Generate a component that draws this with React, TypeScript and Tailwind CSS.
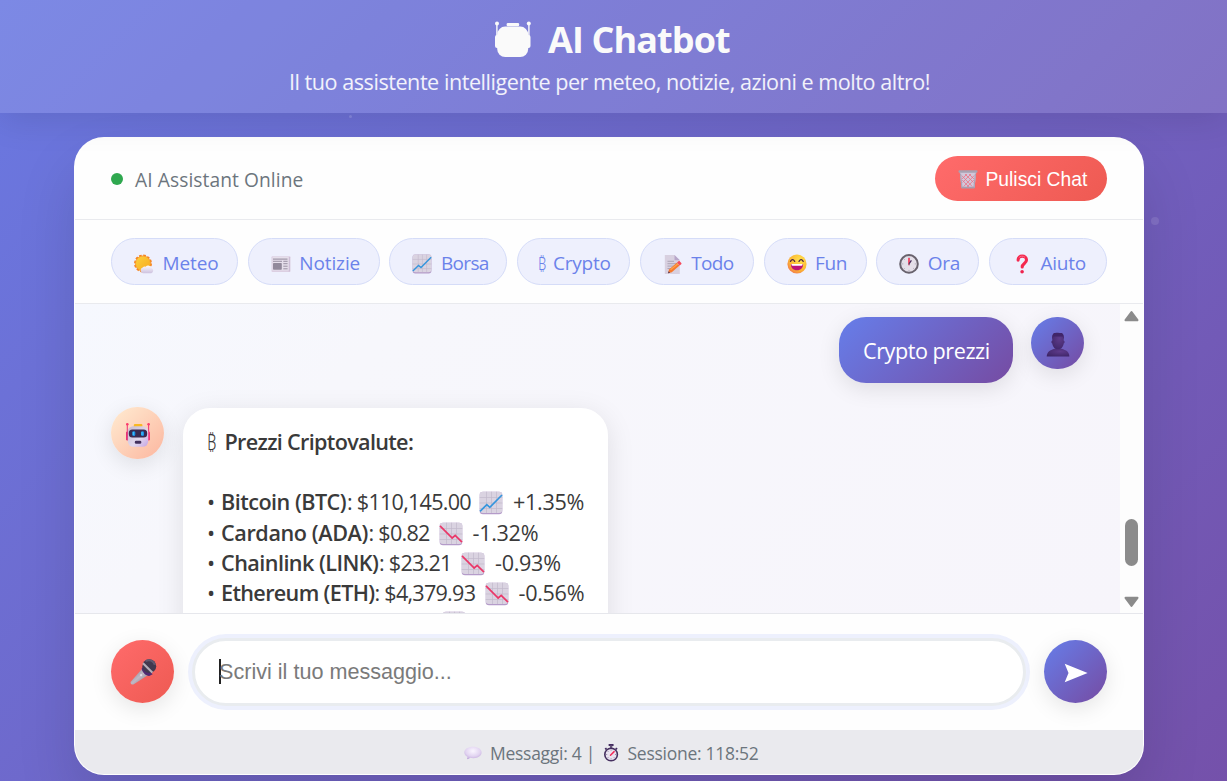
import React from "react";

type IconProps = { className?: string };

function RobotSilhouette({ className }: IconProps) {
  return (
    <svg viewBox="0 0 38 38" className={className} fill="#fafafa">
      <circle cx="3" cy="3.6" r="2" />
      <circle cx="34.8" cy="3.6" r="2" />
      <rect x="2.2" y="4" width="1.4" height="14" />
      <rect x="34.2" y="4" width="1.4" height="14" />
      <rect x="1" y="15" width="5" height="13" rx="2" />
      <rect x="31.5" y="15" width="5" height="13" rx="2" />
      <rect x="12.6" y="2.9" width="12.6" height="3.4" rx="1.4" />
      <rect x="3.2" y="6.6" width="31" height="30.4" rx="8" />
    </svg>
  );
}

function RobotIcon({ className }: IconProps) {
  return (
    <svg viewBox="0 0 26 26" className={className}>
      <defs>
        <linearGradient id="rb-head" x1="0" y1="0" x2="1" y2="1">
          <stop offset="0" stopColor="#c5bbcf" />
          <stop offset=".6" stopColor="#e2d8ee" />
          <stop offset="1" stopColor="#c4a3e4" />
        </linearGradient>
      </defs>
      <path d="M2.3 2.5v12M23.6 2.5v12" stroke="#ef3d78" strokeWidth="1.1" />
      <circle cx="2.3" cy="2.2" r="1.3" fill="#fb3c6c" />
      <circle cx="23.6" cy="2.2" r="1.3" fill="#fb3c6c" />
      <rect x="1.1" y="9.5" width="3" height="9" rx="1.3" fill="#e5246f" />
      <rect x="22" y="9.5" width="3" height="9" rx="1.3" fill="#f73b79" />
      <rect x="8.8" y="1.9" width="8.6" height="4" rx="1.2" fill="#f9b822" />
      <rect x="2.8" y="4.2" width="20.4" height="20.6" rx="5.5" fill="url(#rb-head)" />
      <rect x="3.8" y="7.6" width="18.4" height="8" rx="3.6" fill="#3a2b51" />
      <rect x="7.3" y="9.2" width="3" height="4.9" rx="1.4" fill="#1d8fe8" />
      <rect x="16" y="9.2" width="3" height="4.9" rx="1.4" fill="#1d8fe8" />
      <path d="M8.3 10v3M17 10v3" stroke="#43cdfc" strokeWidth="1" />
      <rect x="9.8" y="18.8" width="6.5" height="2.9" rx="1.3" fill="#43305c" />
    </svg>
  );
}

function UserIcon({ className }: IconProps) {
  return (
    <svg viewBox="0 0 24 25" className={className}>
      <defs>
        <radialGradient id="us" cx=".6" cy=".35" r=".8">
          <stop offset="0" stopColor="#5e3b8b" />
          <stop offset="1" stopColor="#3c2465" />
        </radialGradient>
      </defs>
      <path d="M.7 24.4C1 19.8 4 18.2 8.6 16.8h7c4.6 1.4 7.5 3 7.8 7.6z" fill="url(#us)" />
      <path d="M6.3 4.500C6.300 2 8.200.9 12 .9s5.700 1.200 5.700 3.600v3.900c1.200 0 1.200 2.800 0 3-.4 3.200-2.600 5.900-5.700 5.900s-5.300-2.700-5.700-5.900c-1.200-.2-1.200-3 0-3z" fill="url(#us)" />
      <path d="M6.500 7.600C6 3.500 7 .8 9 1.100c1.700-.7 4.800-.5 6.200 0 2 0 2.900 2.700 2.400 6.500l-.9-3.100H7.400z" fill="#402569" />
    </svg>
  );
}

function ChartIcon({ className, down }: IconProps & { down?: boolean }) {
  return (
    <svg viewBox="0 0 24 24" className={className}>
      <rect x=".7" y=".7" width="22.600" height="22.600" rx="3.300" fill="#b49bc9" />
      <rect x=".7" y=".7" width="22.600" height="21.300" rx="3.300" fill="#dad3e1" />
      <path d="M7.500.7V22M12.500.7V22M17.500.7V22M.7 6.500h22.600M.7 12h22.600M.7 17.500h22.600" stroke="#c2b9cb" strokeWidth=".7" />
      {down ? (
        <path d="M1 3.800L13.200 16l3-2.600L23 20.200" fill="none" stroke="#ea3768" strokeWidth="1.700" />
      ) : (
        <path d="M1 20.400l6.800-6.700 3 2.600L23 4" fill="none" stroke="#3595dd" strokeWidth="1.700" />
      )}
    </svg>
  );
}

function SunCloudIcon({ className }: IconProps) {
  return (
    <svg viewBox="0 0 20 20" className={className}>
      <defs>
        <linearGradient id="sc-c" x1="0" y1="0" x2="0" y2="1">
          <stop offset="0" stopColor="#fbf9fd" />
          <stop offset="1" stopColor="#cdc1df" />
        </linearGradient>
        <linearGradient id="sc-s" x1="0" y1="0" x2="1" y2="1">
          <stop offset="0" stopColor="#fcd23c" />
          <stop offset="1" stopColor="#f7a91f" />
        </linearGradient>
      </defs>
      <circle cx="9" cy="9.500" r="8" fill="none" stroke="#f5811f" strokeWidth="1.900" strokeDasharray="2.600 1.590" />
      <circle cx="9" cy="9.500" r="7.600" fill="url(#sc-s)" stroke="#f79024" strokeWidth=".8" />
      <path d="M9 19.200a2.900 2.900 0 0 1-.3-5.600 2.700 2.700 0 0 1 2.900-.9 3.800 3.800 0 0 1 6.200 1.400 2.800 2.800 0 0 1-.5 5.100z" fill="url(#sc-c)" />
    </svg>
  );
}

function NewsIcon({ className }: IconProps) {
  return (
    <svg viewBox="0 0 20 20" className={className}>
      <rect x=".5" y="2.300" width="19" height="15.700" rx="1" fill="#dccfe2" />
      <rect x="1.500" y="2.800" width="16.500" height="13.700" fill="#e6dfeb" />
      <path d="M2 5.100h14.500" stroke="#91889a" strokeWidth="1" />
      <rect x="2" y="9" width="8.800" height="6.700" rx=".8" fill="#92899b" />
      <path d="M2 7.300h9M12.300 7.300h4.300M12.300 9.700h4.300M12.300 12.200h4.300M12.300 14.800h4.300" stroke="#91889a" strokeWidth=".9" />
      <path d="M18.300 3v14.500" stroke="#c7b5d2" strokeWidth=".8" />
    </svg>
  );
}

function MemoIcon({ className }: IconProps) {
  return (
    <svg viewBox="0 0 20 20" className={className}>
      <path d="M1.800 1h9.700l5.300 5.300V20H2.300a.5.500 0 0 1-.5-.5z" fill="#d8d0e0" />
      <path d="M11.500 1l5.300 5.300h-5.300z" fill="#b7a6c9" />
      <path d="M4.500 7.300h6.500M4.500 9.700h9M4.500 12.100h8M4.500 14.500h4.500" stroke="#a79fb1" strokeWidth=".9" />
      <path d="M5 19.300l1-3.900 7.800-6.700 2.700 2.900-7.700 6.700z" fill="#f7792e" />
      <path d="M7.500 15.800l7.500-6" stroke="#fca54b" strokeWidth="1.100" />
      <path d="M14 8.500l1.500-1.200c.5-.4 1-.3 1.400.1l1.400 1.500c.4.500.3 1-.1 1.400l-1.500 1.200z" fill="#f64b5d" />
      <path d="M5 19.300l.6-2.100 1.500 1.500z" fill="#503b5e" />
    </svg>
  );
}

function LaughIcon({ className }: IconProps) {
  return (
    <svg viewBox="0 0 20 20" className={className}>
      <defs>
        <radialGradient id="lf" cx=".65" cy=".3" r=".8">
          <stop offset="0" stopColor="#ffe14d" />
          <stop offset=".65" stopColor="#fcb733" />
          <stop offset="1" stopColor="#f2704f" />
        </radialGradient>
      </defs>
      <circle cx="10" cy="10" r="9.600" fill="url(#lf)" />
      <path d="M3.500 7.400q2-3.400 4.200 0M12 7.400q2.100-3.400 4.200 0" fill="none" stroke="#482641" strokeWidth="1.300" strokeLinecap="round" />
      <path d="M3.900 10h12.200c.2 3.600-2.200 6.300-6.100 6.300s-6.300-2.700-6.100-6.300z" fill="#bd1477" />
      <path d="M4.500 10h11v.8c0 .6-.4.9-1 .9h-9c-.6 0-1-.3-1-.9z" fill="#fff" />
    </svg>
  );
}

function ClockIcon({ className }: IconProps) {
  return (
    <svg viewBox="0 0 20 20" className={className}>
      <circle cx="10" cy="9.900" r="8.800" fill="#e4dfe9" stroke="#68626d" strokeWidth="2" />
      <path d="M10 2.700V4M10 15.900v1.300M3 9.900h1.300M15.700 9.900H17M5 5l.8.800M14.200 14.100l.8.800M5 14.900l.8-.8" stroke="#a79fb0" strokeWidth=".8" />
      <path d="M10 11.200V3.900" stroke="#f52f50" strokeWidth="1.600" />
      <path d="M10 10l2.400-3.600" stroke="#492b5d" strokeWidth="1.300" />
      <circle cx="10" cy="10.200" r=".8" fill="#8b7b96" />
    </svg>
  );
}

function QuestionIcon({ className }: IconProps) {
  return (
    <svg viewBox="0 0 20 20" className={className}>
      <path d="M6.100 6.100C6.100 3.500 7.800 2.100 10.200 2.100s4.300 1.500 4.300 3.900c0 3.600-4.300 3.500-4.300 7" fill="none" stroke="#f4294f" strokeWidth="3.100" strokeLinecap="round" />
      <path d="M7 3.500c1-1.500 4-2 5.700-.5" fill="none" stroke="#ff6b86" strokeWidth="1" strokeLinecap="round" />
      <circle cx="10.100" cy="17.800" r="1.800" fill="#ee234e" />
    </svg>
  );
}

function TrashIcon({ className }: IconProps) {
  return (
    <svg viewBox="0 0 20 20" className={className}>
      <path d="M1.700 2.500h16.600l-1.700 16.300H3.500z" fill="#d3c7da" />
      <path d="M3.700 6.500l10.500 11M7 5l8.500 8.500M11 5l5 5M4.200 11l6.800 7M16.200 6.500l-10.500 11M13 5L4.500 13.500M9 5L4 10M15.800 11l-6.800 7" stroke="#ea7386" strokeWidth=".8" />
      <path d="M2.500 4.500l1.400 13.500M17.500 4.500L16 18" stroke="#aaa3b7" strokeWidth="1.200" />
      <rect x=".5" y="1.300" width="19" height="2.400" rx="1" fill="#a8a2b2" />
      <rect x="3.200" y="17.700" width="13.700" height="1.900" rx=".8" fill="#a69dae" />
    </svg>
  );
}

function MicIcon({ className }: IconProps) {
  return (
    <svg viewBox="0 0 28 28" className={className}>
      <defs>
        <linearGradient id="mc" x1="0" y1="0" x2="1" y2="1">
          <stop offset="0" stopColor="#7f7886" />
          <stop offset=".5" stopColor="#c0b9c5" />
          <stop offset="1" stopColor="#7b7482" />
        </linearGradient>
      </defs>
      <path d="M12.700 11.200l6.500 5.900L4.400 26.400c-1.200.7-3.500-.9-2.800-2.500z" fill="url(#mc)" />
      <path d="M12.700 10.600l2-3 9 8.700-3.500 1.800c-2.500.3-7.300-3.600-7.500-7.500z" fill="#512b71" />
      <circle cx="20.300" cy="8.200" r="6.900" fill="#42394f" />
      <path d="M16.500 3.300a6 6 0 0 1 9.300 3.600" fill="none" stroke="#625970" strokeWidth="2" />
      <path d="M14 5.300l9.300 9.300" stroke="#b6afba" strokeWidth="2.100" />
      <circle cx="12.100" cy="17.200" r="1.100" fill="#e5dde8" />
    </svg>
  );
}

function SpeechIcon({ className }: IconProps) {
  return (
    <svg viewBox="0 0 18 18" className={className}>
      <defs>
        <radialGradient id="sp" cx=".5" cy=".35" r=".7">
          <stop offset="0" stopColor="#faf6ff" />
          <stop offset=".6" stopColor="#e2d4f1" />
          <stop offset="1" stopColor="#bfa5da" />
        </radialGradient>
      </defs>
      <path d="M9 2.700c5 0 8.600 2.400 8.600 5.800S14 14.200 9.500 14.200c-1.300 0-2.300-.1-3.400-.4-.7.900-1.900 1.500-2.900 1.300-.6-.1.500-1.300.2-2.400C1.600 11.700.3 10.400.3 8.500.3 5.100 4 2.700 9 2.700z" fill="url(#sp)" />
    </svg>
  );
}

function StopwatchIcon({ className }: IconProps) {
  return (
    <svg viewBox="0 0 18 18" className={className}>
      <rect x="6.600" y="0" width="5" height="2" rx=".6" fill="#432b60" />
      <rect x="7.900" y="1.500" width="2.400" height="2.500" fill="#6a5a7c" />
      <path d="M2.600 4.400l1.500-1 1 1.600-1.400 1z" fill="#432b60" />
      <path d="M15.600 4.400l-1.500-1-1 1.600 1.400 1z" fill="#432b60" />
      <circle cx="9.100" cy="10.500" r="6.300" fill="#e9e2ef" stroke="#463060" strokeWidth="1.600" />
      <path d="M9.100 5.500v1.100M9.100 14.300v1.100M4.100 10.500h1.100M13 10.500h1.100M5.600 7l.8.800M11.900 13.300l.7.700M5.600 14l.8-.8" stroke="#86789a" strokeWidth=".8" />
      <path d="M8.500 11.200l3.600-3.600" stroke="#f22d5a" strokeWidth="1.500" strokeLinecap="round" />
    </svg>
  );
}

const bitcoinSign = (
  <span className="inline-block w-[9px] whitespace-nowrap font-['Noto_Sans',sans-serif] font-light">
    <span className="inline-block origin-left scale-x-[.76]">₿</span>
  </span>
);

const chips = [
  { label: "Meteo", icon: SunCloudIcon, box: "w-[127px]", track: "tracking-[-.1px]" },
  { label: "Notizie", icon: NewsIcon, box: "w-[132px]", track: "tracking-[-.1px]" },
  { label: "Borsa", icon: ChartIcon, box: "w-[118px]", track: "tracking-[-.65px]" },
  { label: "Crypto", icon: null, box: "w-[113px]", track: "tracking-[-.25px]" },
  { label: "Todo", icon: MemoIcon, box: "w-[114px]", track: "tracking-[-.7px]" },
  { label: "Fun", icon: LaughIcon, box: "w-[103px]", track: "tracking-[-.3px]" },
  { label: "Ora", icon: ClockIcon, box: "w-[103px]", track: "tracking-[-.3px]" },
  { label: "Aiuto", icon: QuestionIcon, box: "w-[118px]", track: "tracking-[-.2px]" },
];

const prices = [
  { name: "Bitcoin (BTC)", nameCls: "w-[126px] tracking-[-.52px]", price: "$110,145.00", priceCls: "w-[132px]", down: false, pct: "+1.35%", height: "h-[31px]" },
  { name: "Cardano (ADA)", nameCls: "w-[147.5px] tracking-[-.4px]", price: "$0.82", priceCls: "w-[70px]", down: true, pct: "-1.32%", height: "h-[30px]" },
  { name: "Chainlink (LINK)", nameCls: "w-[158px] tracking-[-.55px]", price: "$23.21", priceCls: "w-[82px]", down: true, pct: "-0.93%", height: "h-[30px]" },
  { name: "Ethereum (ETH)", nameCls: "w-[153.5px] tracking-[-.65px]", price: "$4,379.93", priceCls: "w-[110px]", down: true, pct: "-0.56%", height: "h-[30px]" },
];

export default function App() {
  return (
    <div className="relative flex h-[781px] w-full flex-col overflow-hidden bg-[linear-gradient(135deg,#6a79e2_0%,#764ba2_115%)] font-['Open_Sans',sans-serif]">
      <div className="absolute left-[349px] top-[115px] z-20 size-[3px] rounded-full bg-white/15" />
      <div className="absolute left-[1151px] top-[217px] z-20 size-2 rounded-full bg-white/10" />

      <header className="z-10 flex h-[113px] w-full shrink-0 flex-col items-center bg-white/[.12] pt-[12px] shadow-[0_6px_34px_rgba(0,0,0,.11)]">
        <h1 className="flex h-[54px] w-[239px] items-center whitespace-nowrap text-[36px] font-bold leading-[54px] tracking-[-.9px] text-[#fafafa]">
          <RobotSilhouette className="mr-[16px] size-[38px] shrink-0" />
          <span className="pt-px">AI Chatbot</span>
        </h1>
        <p className="-mt-px whitespace-nowrap pr-[8px] text-[21.6px] leading-[33px] tracking-[-.47px] text-white/90">
          Il tuo assistente intelligente per meteo, notizie, azioni e molto altro!
        </p>
      </header>

      <main className="ml-[74px] mt-6 flex h-[638px] w-[1070px] shrink-0 flex-col overflow-hidden rounded-[30px] border border-white/20 bg-[#fefefe] shadow-[0_30px_60px_rgba(0,0,0,.12)]">
        <div className="flex h-[82px] shrink-0 items-center justify-between border-b border-[#e9eaee] px-9 text-[#6c757d]">
          <div className="flex items-center">
            <span className="mt-px size-3 rounded-full bg-[#2fa84f]" />
            <span className="ml-[12px] mt-[3px] whitespace-nowrap text-[19.2px] tracking-[.08px]">AI Assistant Online</span>
          </div>
          <button className="flex h-[45px] w-[172px] items-center rounded-full bg-[linear-gradient(135deg,#ff6b6b,#ee5a52)] pl-[23px] font-['Liberation_Sans',sans-serif] text-[19.3px] text-white">
            <TrashIcon className="mr-[7.5px] mt-px size-5 shrink-0" />
            <span className="mt-[4px] whitespace-nowrap">Pulisci Chat</span>
          </button>
        </div>

        <nav className="flex h-[84px] shrink-0 items-center justify-between border-b border-[#e9eaee] px-9">
          {chips.map(({ label, icon: Icon, box, track }) => (
            <button
              key={label}
              className={`flex h-[47px] shrink-0 items-center rounded-full border border-[#d5dcf8] bg-[#eef0fd] text-[19px] text-[#6b82ea] ${box} ${Icon ? "pl-[22px]" : "pl-[20px]"}`}
            >
              {Icon ? <Icon className="mr-[8.5px] mt-[4px] size-5 shrink-0" /> : <span className="mr-[6px] mt-[4px]">{bitcoinSign}</span>}
              <span className={`mt-[4px] whitespace-nowrap ${track}`}>{label}</span>
            </button>
          ))}
        </nav>

        <section className="flex h-[309px] shrink-0 overflow-hidden">
          <div className="flex w-[1045px] flex-col overflow-hidden bg-[linear-gradient(135deg,#f6f8fe_0%,#f7f7fc_25%,#f7f5fb_100%)] pl-9 pr-9 pt-[13px]">
            <div className="flex h-[66px] shrink-0 items-start justify-end gap-[18px]">
              <div className="flex h-[66px] w-[174px] items-center whitespace-nowrap rounded-[27px] bg-[linear-gradient(135deg,#667eea,#764ba2)] pl-[24px] pt-[3px] text-[21.6px] tracking-[-.45px] text-white shadow-[0_6px_22px_rgba(0,0,0,.1)]">
                Crypto prezzi
              </div>
              <div className="flex h-[52px] w-[53px] items-center justify-center rounded-full bg-[linear-gradient(135deg,#667eea,#764ba2)] pt-[2px] shadow-[0_6px_22px_rgba(0,0,0,.1)]">
                <UserIcon className="h-[25px] w-6" />
              </div>
            </div>

            <div className="mt-6 flex shrink-0 items-start gap-[19px]">
              <div className="flex h-[52px] w-[53px] items-center justify-center rounded-full bg-[linear-gradient(135deg,#ffecd2,#fcb69f)] pt-[3px] shadow-[0_6px_22px_rgba(0,0,0,.1)]">
                <RobotIcon className="size-[26px]" />
              </div>
              <div className="mt-px h-[300px] w-[425px] rounded-[27px] bg-white pl-6 pt-[18px] text-[21.6px] leading-[31px] text-[#3a3a3a] shadow-[0_6px_28px_rgba(0,0,0,.1)]">
                <div className="flex h-[60px] whitespace-nowrap">
                  {bitcoinSign}
                  <strong className="ml-[8.500px] font-semibold tracking-[-.68px]">Prezzi Criptovalute:</strong>
                </div>
                {prices.map((p) => (
                  <div key={p.name} className={`flex whitespace-nowrap ${p.height}`}>
                    <span className="w-[14px]">•</span>
                    <strong className={`shrink-0 font-semibold ${p.nameCls}`}>{p.name}</strong>
                    <span className={`shrink-0 tracking-[-.75px] ${p.priceCls}`}>: {p.price}</span>
                    <ChartIcon down={p.down} className="mt-[5px] size-6 shrink-0" />
                    <span className="ml-[10px] tracking-[-.3px]">{p.pct}</span>
                  </div>
                ))}
                <div className="flex">
                  <ChartIcon className="ml-[235px] mt-[4px] size-6" />
                </div>
              </div>
            </div>
          </div>
          <div className="flex w-[23px] flex-col items-center bg-[#fdfdfd] pt-[6px]">
            <svg viewBox="0 0 15 12" className="h-3 w-[15px]" fill="#8b8b8b" stroke="#8b8b8b" strokeWidth="2" strokeLinejoin="round">
              <path d="M7.500 2L13.500 10.200H1.500z" />
            </svg>
            <div className="mt-[197px] h-[47px] w-[13px] rounded-full bg-[#8b8b8b]" />
            <svg viewBox="0 0 15 12" className="mt-[30px] h-3 w-[15px]" fill="#8b8b8b" stroke="#8b8b8b" strokeWidth="2" strokeLinejoin="round">
              <path d="M1.500 1.800h12L7.500 10z" />
            </svg>
          </div>
        </section>

        <div className="flex h-[117px] shrink-0 items-center justify-between border-t border-[#e6e7ec] px-9">
          <button className="mb-[2px] flex size-[63px] items-center justify-center rounded-full bg-[linear-gradient(135deg,#ff6b6b,#ee5a52)] pt-px shadow-[0_6px_22px_rgba(0,0,0,.1)]">
            <MicIcon className="size-7" />
          </button>
          <div className="mb-px flex h-[68px] w-[834px] items-center rounded-full border-[3px] border-[#e9ecef] bg-white pl-[24px] font-['Liberation_Sans',sans-serif] text-[21.6px] text-[#7a7a7a] shadow-[0_0_0_4px_#edf0fd]">
            <span className="h-[25px] w-[2px] shrink-0 bg-[#222]" />
            <span className="-ml-[2px] mt-[2px] whitespace-nowrap">Scrivi il tuo messaggio...</span>
          </div>
          <button className="mb-[2px] flex size-[63px] items-center justify-center rounded-full bg-[linear-gradient(135deg,#667eea,#764ba2)] shadow-[0_6px_22px_rgba(0,0,0,.1)]">
            <svg viewBox="0 0 24 20" className="mt-[3px] h-5 w-6" fill="#fff">
              <path d="M.7.700L23.600 10 .7 19.300 4.500 10z" />
            </svg>
          </button>
        </div>

        <footer className="flex h-[45px] shrink-0 items-center whitespace-nowrap bg-[#eaeaee] pl-[389px] text-[17.5px] tracking-[-.27px] text-[#6c757d]">
          <SpeechIcon className="mr-[8px] size-[18px] shrink-0" />
          <span className="w-[111.5px] pt-px">Messaggi: 4 |</span>
          <StopwatchIcon className="mr-[8px] size-[18px] shrink-0" />
          <span className="pt-px">Sessione: 118:52</span>
        </footer>
      </main>
    </div>
  );
}
